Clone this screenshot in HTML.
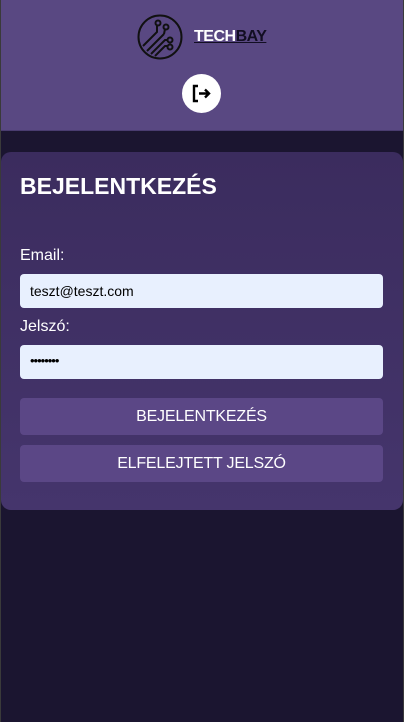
<!DOCTYPE html>
<html><head><meta charset="utf-8"><style>
*{box-sizing:border-box;margin:0;padding:0}
html,body{width:404px;height:722px;overflow:hidden}
body{background:#1b1530;font-family:"Liberation Sans",sans-serif;position:relative}
.bl{position:absolute;top:0;width:1px;height:722px;background:#3a3a3a}
.hdr{position:absolute;left:1px;top:0;width:402px;height:131px;background:#594882;border-bottom:1px solid #4a3c70}
.logo{position:absolute;left:136px;top:14px}
.brand{position:absolute;left:193px;top:28px;font-weight:bold;font-size:16px;letter-spacing:-0.5px;text-decoration:underline;color:#120e22}
.brand span{color:#fff}
.lo{position:absolute;left:181px;top:74px;width:39px;height:39px;border-radius:50%;background:#fff}
.card{position:absolute;left:1px;top:152px;width:402px;height:358px;border-radius:10px;background:linear-gradient(#3b2c5e,#45356c)}
h1{position:absolute;left:19px;top:21px;color:#fff;font-size:23px;font-weight:bold}
.lbl{position:absolute;left:19px;color:#fff;font-size:16px}
.inp{position:absolute;left:19px;width:363px;height:34px;background:#e8f0fe;border-radius:4px;font-size:14px;color:#000;padding:9px 0 0 10px}
.btn{position:absolute;left:19px;width:363px;height:37px;background:#5b4786;border-radius:4px;color:#fff;font-size:16px;text-align:center;line-height:37px;letter-spacing:-0.2px}
</style></head><body>
<div class="bl" style="left:0"></div><div class="bl" style="right:0"></div>
<div class="hdr">
<svg class="logo" width="46" height="46" viewBox="0 0 46 46" fill="none" stroke="#111" stroke-width="2">
<circle cx="23" cy="23" r="21.5"/>
<path d="M6 32 L20 18 L20 11"/><circle cx="21" cy="9" r="2.5"/>
<path d="M10 37 L24 23 L27 20"/><circle cx="29" cy="13" r="2.5"/><path d="M27 20 L28 15"/>
<path d="M14 40 L28 26 L31 26"/><circle cx="33" cy="26" r="2.5"/>
<path d="M18 42 L28 32 L31 32"/><circle cx="33" cy="33" r="2.5"/>
</svg>
<div class="brand"><span>TECH</span>BAY</div>
<div class="lo"><svg width="39" height="39" viewBox="0 0 39 39" fill="none" stroke="#000" stroke-width="2.4"><path d="M16 12 H12 V27 H16"/><path d="M17 19.5 H27 M23 15.5 L27 19.5 L23 23.5"/></svg></div>
</div>
<div class="card">
<h1>BEJELENTKEZÉS</h1>
<div class="lbl" style="top:95px">Email:</div>
<div class="inp" style="top:122px">teszt@teszt.com</div>
<div class="lbl" style="top:166px">Jelszó:</div>
<div class="inp" style="top:193px;font-size:13px;padding-top:8px;letter-spacing:-1px">••••••••</div>
<div class="btn" style="top:246px">BEJELENTKEZÉS</div>
<div class="btn" style="top:293px">ELFELEJTETT JELSZÓ</div>
</div>
</body></html>
